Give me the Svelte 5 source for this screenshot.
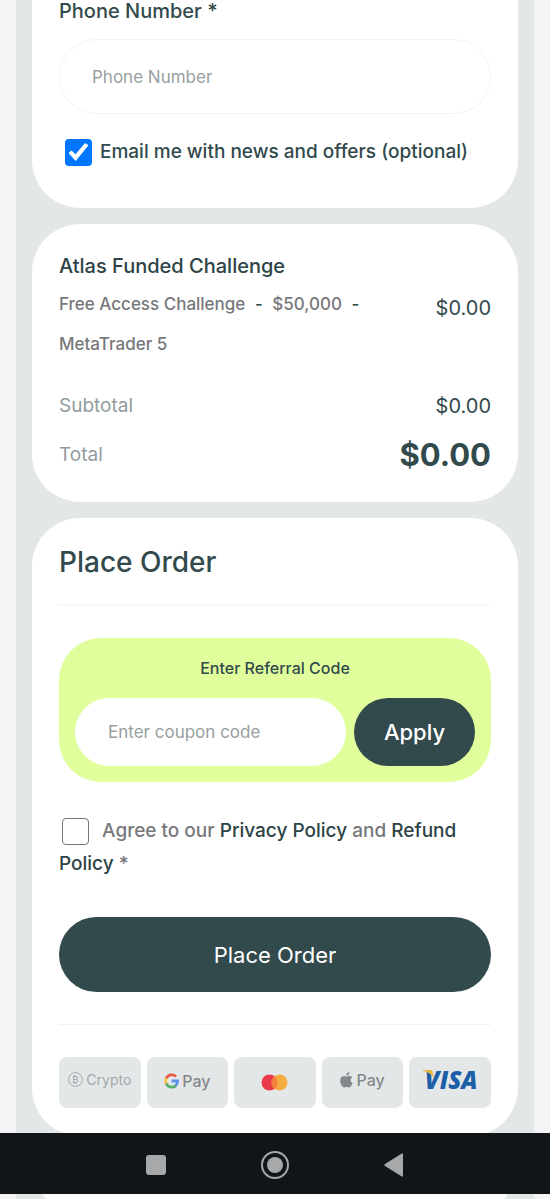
<script>
	let phone = $state('');
	let news = $state(true);
	let coupon = $state('');
	let agree = $state(false);

	const item = {
		name: 'Atlas Funded Challenge',
		plan: 'Free Access Challenge',
		size: '$50,000',
		platform: 'MetaTrader 5',
		price: 0,
	};
	const total = item.price;
	const money = (n) => '$' + n.toFixed(2);
</script>

<div class="page">
	<main>
		<section class="card contact">
			<label class="field-label" for="phone">Phone Number *</label>
			<input class="text" id="phone" type="tel" placeholder="Phone Number" bind:value={phone}>
			<label class="news">
				<input class="check" type="checkbox" bind:checked={news}>
				<span>Email me with news and offers (optional)</span>
			</label>
		</section>

		<section class="card summary">
			<h3>{item.name}</h3>
			<div class="item">
				<p>{item.plan}&nbsp;<b>-</b> {item.size}&nbsp;<b>-</b> {item.platform}</p>
				<span class="price">{money(item.price)}</span>
			</div>
			<div class="row">
				<span>Subtotal</span>
				<span class="amount">{money(total)}</span>
			</div>
			<div class="row total">
				<span>Total</span>
				<strong>{money(total)}</strong>
			</div>
		</section>

		<section class="card order">
			<h2>Place Order</h2>
			<hr>
			<div class="referral">
				<label for="coupon">Enter Referral Code</label>
				<div class="coupon">
					<input class="text" id="coupon" type="text" placeholder="Enter coupon code" bind:value={coupon}>
					<button type="button">Apply</button>
				</div>
			</div>
			<p class="agree">
				<input class="check" id="agree" type="checkbox" bind:checked={agree}>
				<label for="agree">Agree to our</label> <a href="#privacy">Privacy Policy</a> and <a href="#refund">Refund Policy</a> *
			</p>
			<button class="submit" type="button">Place Order</button>
			<hr class="thin">
			<ul class="methods">
				<li class="crypto">
					<svg width="15" height="15" viewBox="0 0 15 15" fill="none" stroke="#a3a8aa">
						<circle cx="7.5" cy="7.5" r="6.9" />
						<path d="M5.7 4.5v6M4.8 4.5h3.1a1.45 1.45 0 0 1 0 2.9H5.7M7.9 7.4h.3a1.55 1.55 0 0 1 0 3.1H4.8M6.6 3.3v1.2M8 3.3v1.2M6.6 10.5v1.2M8 10.5v1.2" />
					</svg>
					<span>Crypto</span>
				</li>
				<li class="gpay">
					<svg width="15" height="16" viewBox="0 0 15 16" fill="none" stroke-width="2.8">
						<path stroke="#e8584d" d="M12 3.5A6.1 6.1 0 0 0 2.3 5.3" />
						<path stroke="#f5c344" d="M2.3 5.2a6.1 6.1 0 0 0 0 5.5" />
						<path stroke="#55ad68" d="M2.2 10.6a6.1 6.1 0 0 0 9.6 2" />
						<path stroke="#5c93e8" d="M7.6 8h6a6.1 6.1 0 0 1-2 4.7" />
					</svg>
					<span>Pay</span>
				</li>
				<li class="mastercard">
					<svg width="27" height="17" viewBox="0 0 27 17" role="img" aria-label="Mastercard">
						<circle cx="8.5" cy="8.5" r="8" fill="#eb3a4b" />
						<circle cx="18.5" cy="8.5" r="8" fill="#f6ad44" />
						<path d="M13.5 2.2a8 8 0 0 1 0 12.6 8 8 0 0 1 0-12.6z" fill="#f0803c" />
					</svg>
				</li>
				<li class="apple">
					<svg width="13" height="16" viewBox="0 0 13 16" fill="#85888a">
						<path d="M9.4 0c.1 1-.3 1.9-.9 2.6-.6.7-1.4 1.1-2.2 1C6.200 2.700 6.600 1.800 7.200 1.200 7.800.5 8.700.1 9.400 0z" />
						<path d="M12.200 5.400c-1 .6-1.600 1.500-1.600 2.700 0 1.400.8 2.500 2 3-.3.900-.7 1.700-1.200 2.400-.7 1.100-1.400 2-2.400 2-.9 0-1.300-.6-2.400-.6s-1.500.6-2.400.6c-1 0-1.800-1-2.500-2C.3 11.600-.2 8.600.5 6.600 1 5.100 2.300 4 3.800 4c1 0 1.900.7 2.600.7S8.200 4 9.400 4c1.100 0 2.100.5 2.800 1.400z" />
					</svg>
					<span>Pay</span>
				</li>
				<li class="visa">
					<svg width="11" height="10" viewBox="0 0 11 10" fill="#e5b544" aria-hidden="true">
						<path d="M0 0h7.500c1.200 0 1.800.5 2 1.500L11 9C9 4.600 5.500 1.800 0 .7z" />
					</svg>
					<span>VISA</span>
				</li>
			</ul>
		</section>
	</main>

	<nav aria-label="System">
		<button type="button" aria-label="Recent apps">
			<svg width="20" height="20" viewBox="0 0 20 20"><rect width="20" height="20" rx="3" /></svg>
		</button>
		<button type="button" aria-label="Home">
			<svg width="28" height="28" viewBox="0 0 28 28">
				<circle cx="14" cy="14" r="13" fill="none" stroke="#a6a8aa" stroke-width="2" />
				<circle cx="14" cy="14" r="8" />
			</svg>
		</button>
		<button type="button" aria-label="Back">
			<svg width="20" height="24" viewBox="0 0 20 24"><path d="M.6 11.200 17.800.4Q19 0 19 1.200v21.600q0 1.200-1.200.8L.6 12.800Q0 12 .6 11.200z" /></svg>
		</button>
	</nav>
	<div class="peek"><div></div></div>
</div>

<style>
	:global(body) {
		margin: 0;
		background: #f4f4f7;
	}
	.page {
		font-family: Inter, "Liberation Sans", sans-serif;
		color: #324a4c;
		overflow: hidden;
	}
	.page * {
		box-sizing: border-box;
	}
	main {
		display: flex;
		flex-direction: column;
		gap: 16px;
		margin: 0 16px;
		padding: 0 16px;
		background: #e3e7e8;
	}
	h2, h3, p, ul {
		margin: 0;
		padding: 0;
		font-weight: 500;
	}
	button, input {
		font-family: inherit;
	}
	.card {
		background: #fff;
		border-radius: 48px;
		padding: 28px 27px;
	}
	.contact {
		padding-top: 0;
		padding-bottom: 42px;
		border-radius: 0 0 48px 48px;
	}
	.field-label {
		display: block;
		font-size: 20px;
		line-height: 22px;
		font-weight: 500;
		margin-bottom: 17px;
	}
	.text {
		display: block;
		width: 100%;
		min-width: 0;
		height: 75px;
		padding: 0 32px;
		border: 1px solid #f3f4f4;
		border-radius: 38px;
		background: #fff;
		font-size: 17px;
		color: #324a4c;
		outline: none;
	}
	.text::placeholder {
		color: #989fa1;
		opacity: 1;
	}
	.check {
		appearance: none;
		flex: none;
		width: 27px;
		height: 27px;
		margin: 0;
		border: 1px solid #777;
		border-radius: 4px;
		background: #fff;
	}
	.check:checked {
		display: grid;
		place-items: center;
		border: none;
		background: #0075ff;
	}
	.check:checked::before {
		content: "";
		width: 20px;
		height: 18px;
		background: #fff;
		clip-path: polygon(0 56%, 15% 42%, 35% 63%, 83% 0, 100% 13%, 36% 100%);
	}
	.news {
		display: flex;
		align-items: center;
		gap: 8px;
		margin-top: 24px;
		padding-left: 6px;
		font-size: 19px;
		line-height: 28px;
		font-weight: 500;
	}

	.summary {
		padding-bottom: 27px;
	}
	.summary h3 {
		font-size: 20px;
		line-height: 28px;
		color: #2d4345;
	}
	.item {
		display: flex;
		justify-content: space-between;
		margin-top: 4px;
		margin-bottom: 28px;
	}
	.item p {
		max-width: 320px;
		font-size: 17px;
		line-height: 40px;
		color: #77787b;
	}
	.item b {
		margin: 0 5px;
		font-weight: 500;
		color: #324a4c;
	}
	.price {
		font-size: 20px;
		line-height: 48px;
	}
	.row {
		display: flex;
		align-items: center;
		justify-content: space-between;
		line-height: 28px;
		font-size: 19px;
		color: #929b9d;
	}
	.amount {
		font-size: 20px;
		color: #324a4c;
	}
	.total {
		margin-top: 15px;
		line-height: 40px;
	}
	.total strong {
		font-size: 31px;
		color: #324a4c;
	}

	.order {
		padding-top: 24px;
	}
	h2 {
		font-size: 28px;
		line-height: 40px;
	}
	hr {
		height: 2px;
		margin: 22px 0 32px;
		border: 0;
		background: #f7f8f8;
	}
	.thin {
		height: 1px;
		margin: 32px 0;
		background: #f1f2f2;
	}
	.referral {
		padding: 16px;
		border-radius: 42px;
		background: #e0ff9c;
	}
	.referral label {
		display: block;
		margin-bottom: 16px;
		text-align: center;
		font-size: 16px;
		line-height: 28px;
		font-weight: 500;
	}
	.coupon {
		display: flex;
		gap: 8px;
	}
	.coupon .text {
		flex: 1;
		height: 68px;
		border-color: #fff;
	}
	.coupon button, .submit {
		border: 0;
		background: #324a4c;
		color: #fff;
		font-size: 22px;
	}
	.coupon button {
		width: 121px;
		border-radius: 34px;
		font-weight: 500;
	}
	.agree {
		margin-top: 32px;
		font-size: 19px;
		line-height: 33px;
		color: #77787b;
	}
	.agree .check {
		margin: 0 8px 0 3px;
		vertical-align: middle;
	}
	.agree a {
		color: #2d4345;
		text-decoration: none;
	}
	.submit {
		display: block;
		width: 100%;
		height: 75px;
		margin-top: 37px;
		border-radius: 38px;
	}
	.methods {
		display: grid;
		grid-template-columns: repeat(5, 1fr);
		gap: 6px;
		list-style: none;
	}
	.methods li {
		display: flex;
		align-items: center;
		justify-content: center;
		gap: 3px;
		height: 51px;
		padding-bottom: 6px;
		border-radius: 8px;
		background: #e3e7e8;
		color: #85888a;
		font-size: 16px;
	}
	.methods .crypto {
		color: #a3a8aa;
		font-size: 14px;
		font-weight: 400;
	}
	.methods .gpay {
		padding-bottom: 3px;
	}
	.methods .mastercard {
		padding-bottom: 0;
	}
	.methods .visa {
		gap: 0;
		color: #1d5ea8;
		font: italic 800 24px "Open Sans", sans-serif;
	}
	.visa svg {
		margin: 0 -9px 9px 0;
		z-index: 1;
	}

	nav {
		position: relative;
		display: flex;
		align-items: center;
		justify-content: center;
		gap: 91px;
		height: 61px;
		margin-top: -3px;
		padding-top: 3px;
		background: #111518;
	}
	nav button {
		display: grid;
		place-items: center;
		width: 28px;
		height: 28px;
		padding: 0;
		border: 0;
		background: none;
	}
	nav svg {
		fill: #a6a8aa;
	}
	.peek {
		height: 5px;
		margin: 0 16px;
		padding: 0 27px;
		background: #e3e7e8;
	}
	.peek div {
		height: 5px;
		border-radius: 0 0 5px 5px;
		background: #fff;
	}
</style>
